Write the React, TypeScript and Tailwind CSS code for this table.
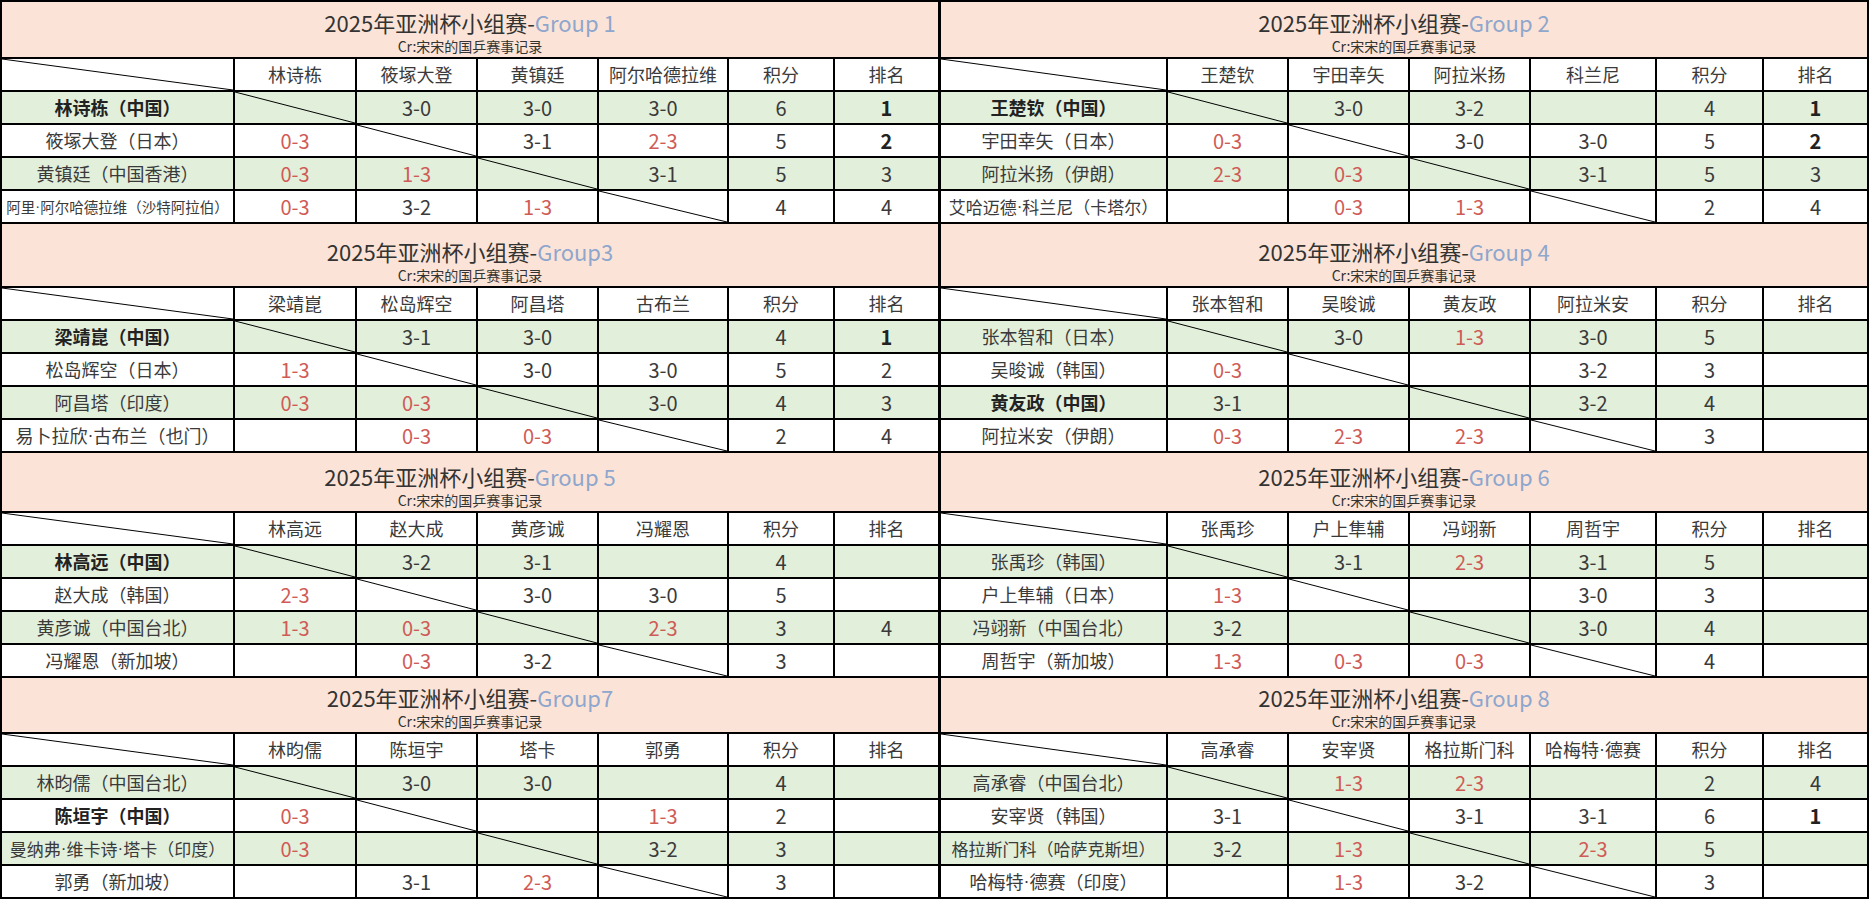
import React from "react";

type Player = {
  name: string;
  bold?: boolean;
  size?: string;
  scores: string[];
  pts: string;
  rank: string;
  rankBold?: boolean;
};

type Group = {
  label: string;
  heads: string[];
  rows: Player[];
};

const groups: Group[] = [
  {
    label: "Group 1",
    heads: ["林诗栋", "筱塚大登", "黄镇廷", "阿尔哈德拉维"],
    rows: [
      { name: "林诗栋（中国）", bold: true, scores: ["", "3-0", "3-0", "3-0"], pts: "6", rank: "1", rankBold: true },
      { name: "筱塚大登（日本）", scores: ["0-3", "", "3-1", "2-3"], pts: "5", rank: "2", rankBold: true },
      { name: "黄镇廷（中国香港）", scores: ["0-3", "1-3", "", "3-1"], pts: "5", rank: "3" },
      { name: "阿里·阿尔哈德拉维（沙特阿拉伯）", size: "text-[14.5px]", scores: ["0-3", "3-2", "1-3", ""], pts: "4", rank: "4" },
    ],
  },
  {
    label: "Group 2",
    heads: ["王楚钦", "宇田幸矢", "阿拉米扬", "科兰尼"],
    rows: [
      { name: "王楚钦（中国）", bold: true, scores: ["", "3-0", "3-2", ""], pts: "4", rank: "1", rankBold: true },
      { name: "宇田幸矢（日本）", scores: ["0-3", "", "3-0", "3-0"], pts: "5", rank: "2", rankBold: true },
      { name: "阿拉米扬（伊朗）", scores: ["2-3", "0-3", "", "3-1"], pts: "5", rank: "3" },
      { name: "艾哈迈德·科兰尼（卡塔尔）", size: "text-[17px]", scores: ["", "0-3", "1-3", ""], pts: "2", rank: "4" },
    ],
  },
  {
    label: "Group3",
    heads: ["梁靖崑", "松岛辉空", "阿昌塔", "古布兰"],
    rows: [
      { name: "梁靖崑（中国）", bold: true, scores: ["", "3-1", "3-0", ""], pts: "4", rank: "1", rankBold: true },
      { name: "松岛辉空（日本）", scores: ["1-3", "", "3-0", "3-0"], pts: "5", rank: "2" },
      { name: "阿昌塔（印度）", scores: ["0-3", "0-3", "", "3-0"], pts: "4", rank: "3" },
      { name: "易卜拉欣·古布兰（也门）", scores: ["", "0-3", "0-3", ""], pts: "2", rank: "4" },
    ],
  },
  {
    label: "Group 4",
    heads: ["张本智和", "吴晙诚", "黄友政", "阿拉米安"],
    rows: [
      { name: "张本智和（日本）", scores: ["", "3-0", "1-3", "3-0"], pts: "5", rank: "" },
      { name: "吴晙诚（韩国）", scores: ["0-3", "", "", "3-2"], pts: "3", rank: "" },
      { name: "黄友政（中国）", bold: true, scores: ["3-1", "", "", "3-2"], pts: "4", rank: "" },
      { name: "阿拉米安（伊朗）", scores: ["0-3", "2-3", "2-3", ""], pts: "3", rank: "" },
    ],
  },
  {
    label: "Group 5",
    heads: ["林高远", "赵大成", "黄彦诚", "冯耀恩"],
    rows: [
      { name: "林高远（中国）", bold: true, scores: ["", "3-2", "3-1", ""], pts: "4", rank: "" },
      { name: "赵大成（韩国）", scores: ["2-3", "", "3-0", "3-0"], pts: "5", rank: "" },
      { name: "黄彦诚（中国台北）", scores: ["1-3", "0-3", "", "2-3"], pts: "3", rank: "4" },
      { name: "冯耀恩（新加坡）", scores: ["", "0-3", "3-2", ""], pts: "3", rank: "" },
    ],
  },
  {
    label: "Group 6",
    heads: ["张禹珍", "户上隼辅", "冯翊新", "周哲宇"],
    rows: [
      { name: "张禹珍（韩国）", scores: ["", "3-1", "2-3", "3-1"], pts: "5", rank: "" },
      { name: "户上隼辅（日本）", scores: ["1-3", "", "", "3-0"], pts: "3", rank: "" },
      { name: "冯翊新（中国台北）", scores: ["3-2", "", "", "3-0"], pts: "4", rank: "" },
      { name: "周哲宇（新加坡）", scores: ["1-3", "0-3", "0-3", ""], pts: "4", rank: "" },
    ],
  },
  {
    label: "Group7",
    heads: ["林昀儒", "陈垣宇", "塔卡", "郭勇"],
    rows: [
      { name: "林昀儒（中国台北）", scores: ["", "3-0", "3-0", ""], pts: "4", rank: "" },
      { name: "陈垣宇（中国）", bold: true, scores: ["0-3", "", "", "1-3"], pts: "2", rank: "" },
      { name: "曼纳弗·维卡诗·塔卡（印度）", size: "text-[17px]", scores: ["0-3", "", "", "3-2"], pts: "3", rank: "" },
      { name: "郭勇（新加坡）", scores: ["", "3-1", "2-3", ""], pts: "3", rank: "" },
    ],
  },
  {
    label: "Group 8",
    heads: ["高承睿", "安宰贤", "格拉斯门科", "哈梅特·德赛"],
    rows: [
      { name: "高承睿（中国台北）", scores: ["", "1-3", "2-3", ""], pts: "2", rank: "4" },
      { name: "安宰贤（韩国）", scores: ["3-1", "", "3-1", "3-1"], pts: "6", rank: "1", rankBold: true },
      { name: "格拉斯门科（哈萨克斯坦）", size: "text-[17px]", scores: ["3-2", "1-3", "", "2-3"], pts: "5", rank: "" },
      { name: "哈梅特·德赛（印度）", scores: ["", "1-3", "3-2", ""], pts: "3", rank: "" },
    ],
  },
];

const LEFT_COLS = "grid-cols-[231px_120px_119px_119px_128px_104px_103px]";
const RIGHT_COLS = "grid-cols-[225px_119px_119px_119px_124px_105px_103px]";
const HEADER_H = ["h-[55px]", "h-[62px]", "h-[58px]", "h-[54px]"];

// the middle dot is narrow in the sheet, not full-width as in the CJK font
function Name({ text }: { text: string }) {
  const parts = text.split("·");
  return (
    <>
      {parts.map((p, i) => (
        <React.Fragment key={i}>
          {i > 0 && <span className="font-['Liberation_Sans',sans-serif]">·</span>}
          {p}
        </React.Fragment>
      ))}
    </>
  );
}

function Diagonal({ bg }: { bg: string }) {
  return (
    <div className={`relative ${bg}`}>
      <svg
        className="absolute inset-0 w-full h-full"
        viewBox="0 0 100 100"
        preserveAspectRatio="none"
      >
        <line x1="0" y1="0" x2="100" y2="100" stroke="#000" strokeWidth="1" vectorEffect="non-scaling-stroke" />
      </svg>
    </div>
  );
}

function isLoss(s: string) {
  const [a, b] = s.split("-").map(Number);
  return a < b;
}

function GroupTable({ g, cols, headerH }: { g: Group; cols: string; headerH: string }) {
  return (
    <div className="flex flex-col gap-[2px]">
      {/* title */}
      <div className={`${headerH} bg-[#fbe4d7] flex flex-col items-center justify-end pb-[3px]`}>
        <div className="text-[22px] leading-[28px] text-[#333]">
          2025年亚洲杯小组赛-<span className="text-[#8fa6cd]">{g.label}</span>
        </div>
        <div className="text-[14px] leading-[16px] mt-[2px] text-[#333]">Cr:宋宋的国乒赛事记录</div>
      </div>

      {/* column heads */}
      <div className={`grid ${cols} gap-[2px] h-[31px] text-[18px] text-[#3a3a3a]`}>
        <Diagonal bg="bg-white" />
        {g.heads.map((h) => (
          <div key={h} className="bg-white flex items-center justify-center whitespace-nowrap">
            <Name text={h} />
          </div>
        ))}
        <div className="bg-white flex items-center justify-center">积分</div>
        <div className="bg-white flex items-center justify-center">排名</div>
      </div>

      {/* players */}
      {g.rows.map((r, i) => {
        const bg = i % 2 === 0 ? "bg-[#e2efda]" : "bg-white";
        return (
          <div key={r.name} className={`grid ${cols} gap-[2px] h-[31px] text-[#3a3a3a]`}>
            <div
              className={`${bg} flex items-center justify-center whitespace-nowrap ${r.size ?? "text-[18px]"} ${
                r.bold ? "font-bold text-[#222]" : ""
              }`}
            >
              <Name text={r.name} />
            </div>
            {r.scores.map((s, j) =>
              j === i ? (
                <Diagonal key={j} bg={bg} />
              ) : (
                <div
                  key={j}
                  className={`${bg} flex items-center justify-center text-[20px] ${
                    s && isLoss(s) ? "text-[#cf5b56]" : ""
                  }`}
                >
                  {s}
                </div>
              )
            )}
            <div className={`${bg} flex items-center justify-center text-[20px]`}>{r.pts}</div>
            <div
              className={`${bg} flex items-center justify-center text-[20px] ${
                r.rankBold ? "font-bold text-[#222]" : ""
              }`}
            >
              {r.rank}
            </div>
          </div>
        );
      })}
    </div>
  );
}

export default function App() {
  return (
    <div className="w-[1869px] h-[899px] overflow-hidden bg-black p-[2px] flex flex-col gap-[2px] font-['Noto_Sans_CJK_SC',sans-serif]">
      {[0, 1, 2, 3].map((k) => (
        <div key={k} className="flex gap-[3px]">
          <GroupTable g={groups[k * 2]} cols={LEFT_COLS} headerH={HEADER_H[k]} />
          <GroupTable g={groups[k * 2 + 1]} cols={RIGHT_COLS} headerH={HEADER_H[k]} />
        </div>
      ))}
    </div>
  );
}
